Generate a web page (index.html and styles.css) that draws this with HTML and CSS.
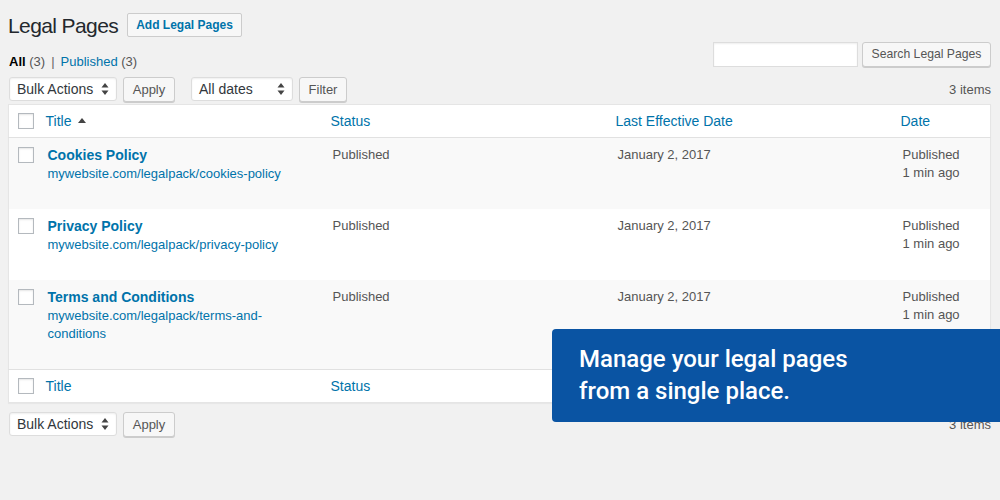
FILE: index.html
```html
<!DOCTYPE html>
<html>
<head>
<meta charset="utf-8">
<link rel="stylesheet" href="styles.css">
</head>
<body>
<div class="wrap">
  <div class="title-row">
    <h1 class="page-title">Legal Pages</h1>
    <a class="btn-add">Add Legal Pages</a>
  </div>

  <div class="views-row">
    <ul class="subsubsub">
      <li class="current">All <span class="count">(3)</span></li>
      <li class="sep">|</li>
      <li><a class="link">Published</a> <span class="count">(3)</span></li>
    </ul>
    <div class="search-box">
      <input class="search-input" type="text">
      <button class="btn btn-search">Search Legal Pages</button>
    </div>
  </div>

  <div class="tablenav">
    <div class="actions">
      <div class="select w-bulk">Bulk Actions<svg class="arrows" viewBox="0 0 8 14" width="8" height="14"><path d="M4 1 L7.5 5.5 H0.5 Z M4 13 L7.5 8.5 H0.5 Z" fill="#444"/></svg></div>
      <button class="btn btn-apply">Apply</button>
    </div>
    <div class="actions gap-left">
      <div class="select w-dates">All dates<svg class="arrows" viewBox="0 0 8 14" width="8" height="14"><path d="M4 1 L7.5 5.5 H0.5 Z M4 13 L7.5 8.5 H0.5 Z" fill="#444"/></svg></div>
      <button class="btn btn-filter">Filter</button>
    </div>
    <div class="items">3 items</div>
  </div>

  <table class="list">
    <colgroup>
      <col class="c-check"><col class="c-title"><col class="c-status"><col class="c-eff"><col class="c-date">
    </colgroup>
    <thead>
      <tr>
        <th class="check"><span class="cb"></span></th>
        <th><a class="link">Title</a><span class="sort"></span></th>
        <th><a class="link">Status</a></th>
        <th><a class="link">Last Effective Date</a></th>
        <th><a class="link">Date</a></th>
      </tr>
    </thead>
    <tbody>
      <tr class="alt">
        <td class="check"><span class="cb"></span></td>
        <td><a class="row-title">Cookies Policy</a><a class="url">mywebsite.com/legalpack/cookies-policy</a><div class="row-actions">&nbsp;</div></td>
        <td>Published</td>
        <td>January 2, 2017</td>
        <td>Published<br>1 min ago</td>
      </tr>
      <tr>
        <td class="check"><span class="cb"></span></td>
        <td><a class="row-title">Privacy Policy</a><a class="url">mywebsite.com/legalpack/privacy-policy</a><div class="row-actions">&nbsp;</div></td>
        <td>Published</td>
        <td>January 2, 2017</td>
        <td>Published<br>1 min ago</td>
      </tr>
      <tr class="alt">
        <td class="check"><span class="cb"></span></td>
        <td><a class="row-title">Terms and Conditions</a><a class="url">mywebsite.com/legalpack/terms-and-<br>conditions</a><div class="row-actions">&nbsp;</div></td>
        <td>Published</td>
        <td>January 2, 2017</td>
        <td>Published<br>1 min ago</td>
      </tr>
    </tbody>
    <tfoot>
      <tr>
        <th class="check"><span class="cb"></span></th>
        <th><a class="link">Title</a></th>
        <th><a class="link">Status</a></th>
        <th><a class="link">Last Effective Date</a></th>
        <th><a class="link">Date</a></th>
      </tr>
    </tfoot>
  </table>

  <div class="tablenav bottom">
    <div class="actions">
      <div class="select w-bulk">Bulk Actions<svg class="arrows" viewBox="0 0 8 14" width="8" height="14"><path d="M4 1 L7.5 5.5 H0.5 Z M4 13 L7.5 8.5 H0.5 Z" fill="#444"/></svg></div>
      <button class="btn btn-apply">Apply</button>
    </div>
    <div class="items">3 items</div>
  </div>
</div>

<div class="promo">
  <p>Manage your legal pages<br>from a single place.</p>
</div>
</body>
</html>
```

FILE: styles.css
```css
html, body {
  margin: 0;
  padding: 0;
  background: #f1f1f1;
  font-family: "Liberation Sans", Arial, sans-serif;
  font-size: 13px;
  color: #444;
  width: 1000px;
  height: 500px;
  overflow: hidden;
  position: relative;
}

.wrap {
  padding: 13px 9px 0 8px;
}

.title-row {
  display: flex;
  align-items: center;
  height: 24px;
}

.page-title {
  margin: 0;
  font-size: 21px;
  letter-spacing: -0.6px;
  font-weight: 400;
  line-height: 24px;
  color: #23282d;
  padding-top: 2px;
}

.btn-add {
  margin-left: 9px;
  height: 22px;
  padding: 0 8px;
  display: flex;
  align-items: center;
  border: 1px solid #ccc;
  border-radius: 2px;
  background: #f7f7f7;
  color: #0073aa;
  font-weight: 700;
  font-size: 12px;
}

.views-row {
  display: flex;
  justify-content: space-between;
  align-items: flex-start;
  margin-top: 5px;
  height: 28px;
}

.subsubsub {
  list-style: none;
  margin: 0 0 -1px;
  padding: 0 0 0 1px;
  display: flex;
  gap: 5px;
  align-self: flex-end;
  line-height: 18px;
  color: #666;
}

.subsubsub .current {
  color: #000;
  font-weight: 600;
}
.subsubsub .current .count { color: #555; font-weight: 400; }
.subsubsub .sep { color: #666; padding: 0 1px; }
.count { color: #555; }

.link { color: #0073aa; text-decoration: none; }

.search-box {
  display: flex;
  gap: 4px;
}

.search-input {
  width: 145px;
  height: 25px;
  box-sizing: border-box;
  border: 1px solid #ddd;
  background: #fff;
  margin: 0;
  padding: 0;
  box-shadow: inset 0 1px 2px rgba(0,0,0,.07);
}

.btn {
  font-family: inherit;
  font-size: 13px;
  color: #555;
  background: #f7f7f7;
  border: 1px solid #ccc;
  border-radius: 3px;
  box-shadow: 0 1px 0 #ccc;
  height: 25px;
  padding: 0 9px;
  margin: 0;
  box-sizing: border-box;
  line-height: 23px;
}

.btn-search {
  font-size: 12.2px;
  width: 129px;
  padding: 0;
}

.tablenav {
  display: flex;
  align-items: center;
  height: 24px;
  margin-top: 7px;
  padding-left: 1px;
}

.actions {
  display: flex;
  align-items: center;
  gap: 6px;
}
.gap-left { margin-left: 16px; }

.select {
  height: 24px;
  box-sizing: border-box;
  border: 1px solid #ddd;
  border-radius: 3px;
  background: #fff;
  box-shadow: inset 0 1px 2px rgba(0,0,0,.07);
  color: #32373c;
  font-size: 14px;
  display: flex;
  align-items: center;
  justify-content: space-between;
  padding: 0 7px 0 7px;
}
.w-bulk { width: 108px; }
.w-dates { width: 102px; }
.arrows { display: block; }

.btn-apply { width: 52px; padding: 0; height: 25px; }
.btn-filter { width: 48px; padding: 0; height: 25px; }

.items {
  margin-left: auto;
  color: #555;
}

.list {
  margin-top: 3px;
  width: 983px;
  border-collapse: collapse;
  table-layout: fixed;
  background: #fff;
  border: 1px solid #e5e5e5;
  box-shadow: 0 1px 1px rgba(0,0,0,.04);
}

.c-check { width: 30px; }
.c-title { width: 285px; }
.c-status { width: 285px; }
.c-eff { width: 285px; }

.list th {
  text-align: left;
  font-weight: 400;
  font-size: 14px;
  height: 32px;
  padding: 0 8px 0 7px;
  vertical-align: middle;
  line-height: 18px;
}

.list thead th { border-bottom: 1px solid #e1e1e1; }
.list tfoot th { border-top: 1px solid #e1e1e1; }

.list th.check, .list td.check {
  padding: 0 0 0 9px;
}

.list td.check { padding-top: 9px; vertical-align: top; }

.cb {
  display: block;
  width: 16px;
  height: 16px;
  box-sizing: border-box;
  border: 1px solid #b4b9be;
  background: #fff;
  box-shadow: inset 0 1px 2px rgba(0,0,0,.1);
}

.sort {
  display: inline-block;
  width: 0;
  height: 0;
  margin-left: 7px;
  border-left: 4px solid transparent;
  border-right: 4px solid transparent;
  border-bottom: 5px solid #444;
  vertical-align: 3px;
}

.list td {
  vertical-align: top;
  padding: 8px 8px 8px 9px;
  line-height: 18px;
  color: #555;
}

.list tr.alt td { background: #f9f9f9; }

.row-title {
  display: block;
  color: #0073aa;
  font-weight: 700;
  font-size: 14px;
  line-height: 19px;
}

.url {
  display: block;
  color: #0073aa;
  line-height: 18px;
}

.row-actions {
  visibility: hidden;
  line-height: 18px;
}

.tablenav.bottom { margin-top: 9px; }

.promo {
  position: absolute;
  left: 552px;
  top: 329px;
  width: 448px;
  height: 93px;
  box-sizing: border-box;
  background: #0a54a3;
  border-radius: 4px 0 0 4px;
  padding: 14px 0 0 27px;
}

.promo p {
  margin: 0;
  font-family: Roboto, "Liberation Sans", sans-serif;
  font-weight: 500;
  font-size: 24px;
  line-height: 32px;
  color: #fff;
}
```
